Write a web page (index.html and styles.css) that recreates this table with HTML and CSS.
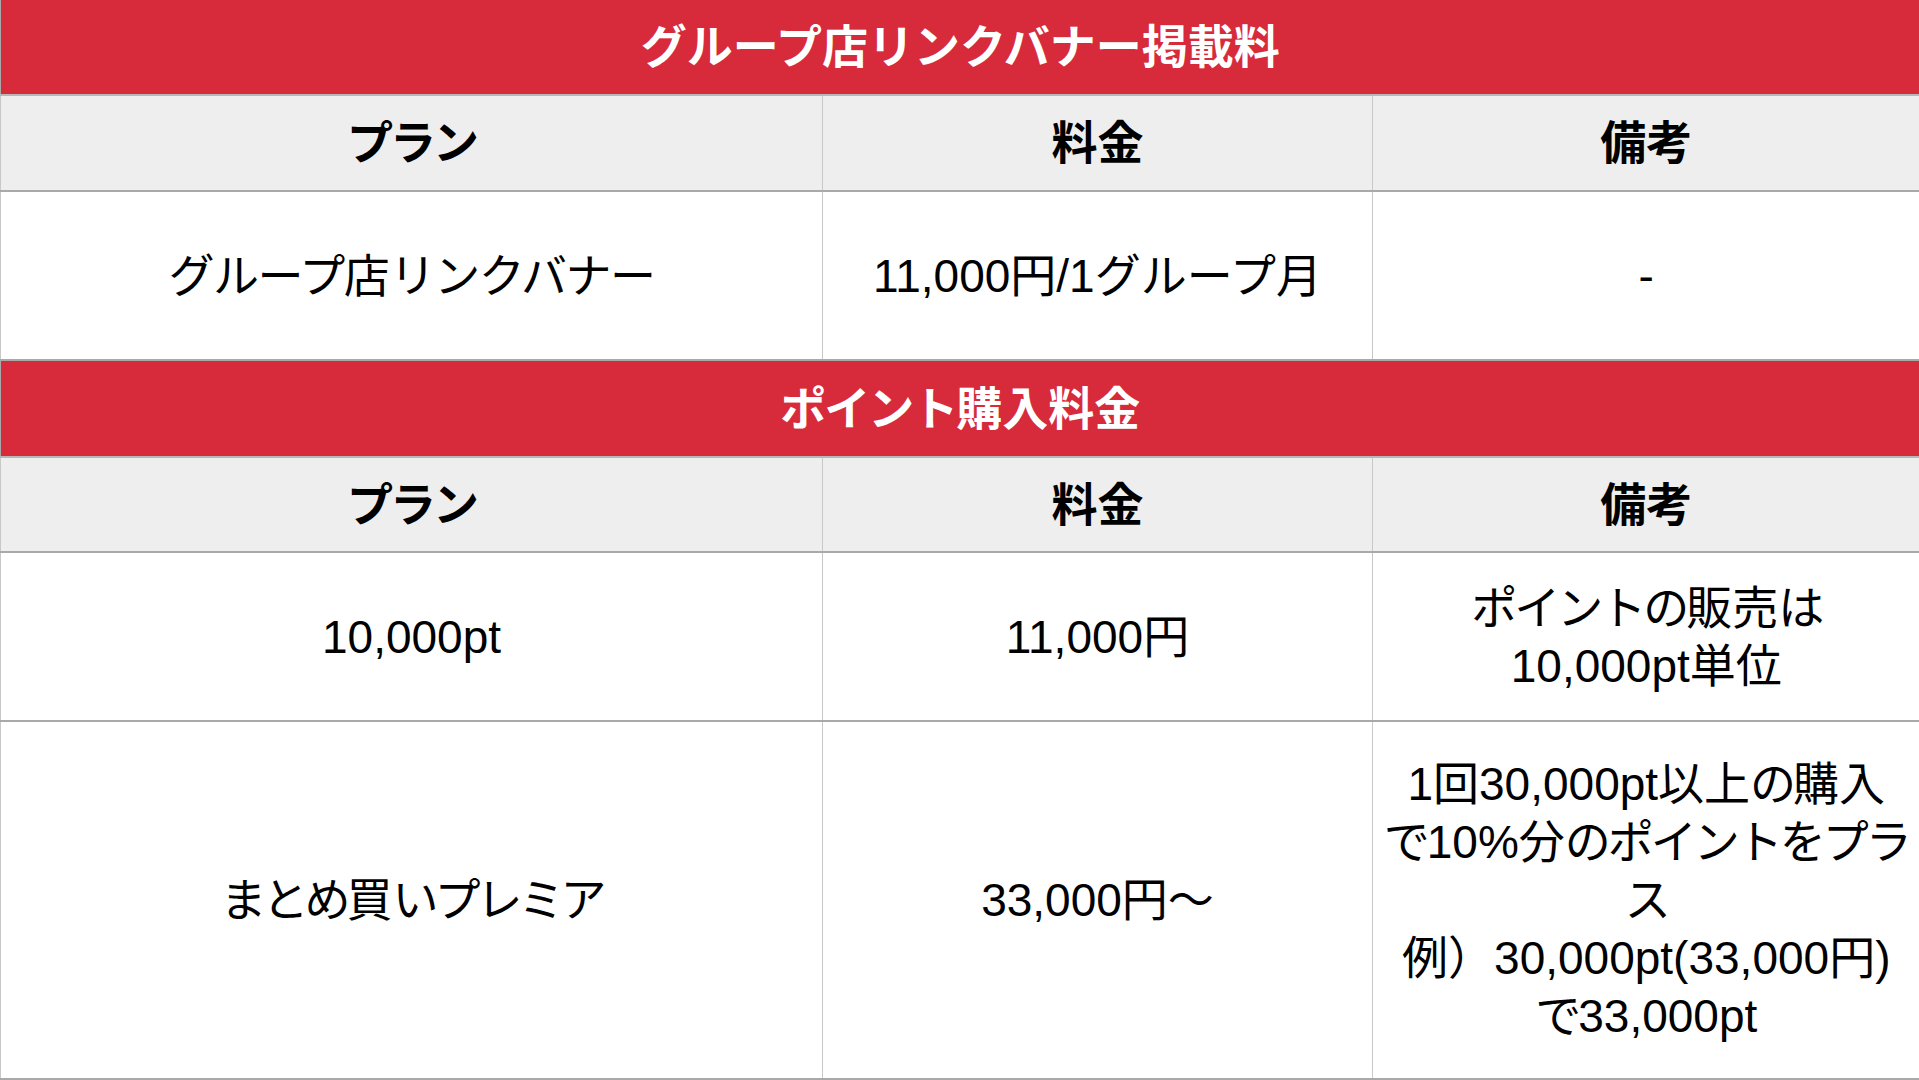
FILE: index.html
```html
<!DOCTYPE html>
<html lang="ja">
<head>
<meta charset="utf-8">
<title>料金表</title>
<link rel="stylesheet" href="styles.css">
</head>
<body>
<table class="price">
  <colgroup>
    <col class="c1">
    <col class="c2">
    <col class="c3">
  </colgroup>
  <tbody>
    <tr class="title-row"><th colspan="3">グループ店リンクバナー掲載料</th></tr>
    <tr class="head-row"><th><span class="kana">プラン</span></th><th>料金</th><th>備考</th></tr>
    <tr class="row-a">
      <td><span class="kana-s">グループ</span>店<span class="kana-s">リンクバナー</span></td>
      <td>11,000円/1グループ月</td>
      <td>-</td>
    </tr>
    <tr class="title-row title-b"><th colspan="3"><span class="kana-t">ポイント</span>購入料金</th></tr>
    <tr class="head-row head-b"><th><span class="kana">プラン</span></th><th>料金</th><th>備考</th></tr>
    <tr class="row-a">
      <td>10,000pt</td>
      <td>11,000円</td>
      <td class="note"><span class="kana">ポイントの</span>販売<span class="kana">は</span><br>10,000pt単位</td>
    </tr>
    <tr class="row-c">
      <td><span class="kana-w">まとめ</span>買<span class="kana-w">いプレミア</span></td>
      <td>33,000円～</td>
      <td class="note">1回30,000pt以上<span class="kana">の</span>購入<br><span class="kana">で</span>10%分<span class="kana">のポイントをプラ</span><br><span class="kana">ス</span><br>例）30,000pt(33,000円)<br><span class="kana">で</span>33,000pt</td>
    </tr>
  </tbody>
</table>
</body>
</html>
```
FILE: styles.css
```css
html, body {
  margin: 0;
  padding: 0;
  background: #ffffff;
}

.price {
  width: 1919px;
  border-collapse: collapse;
  table-layout: fixed;
  font-family: "Liberation Sans", "Noto Sans CJK JP", sans-serif;
  font-size: 46px;
  line-height: 58px;
  color: #000000;
}

.c1 { width: 822px; }
.c2 { width: 550px; }
.c3 { width: 547px; }

.price th,
.price td {
  text-align: center;
  vertical-align: middle;
  padding: 0 6px;
  border-left: 1px solid #c8c8c8;
  border-bottom: 2px solid #a9a9a9;
}

.title-row th {
  background: #d72a3b;
  color: #ffffff;
  font-weight: bold;
  height: 94px;
  border-left: 1px solid #a9a9a9;
  border-bottom: 2px solid #b8b8b8;
}

.title-b th { height: 95px; }

.head-row th {
  background: #eeeeee;
  font-weight: bold;
  height: 94px;
}

.head-b th { height: 93px; }

.row-a td { height: 167px; }

.row-c td { height: 356px; }

.kana { letter-spacing: -3px; }

.kana-s { letter-spacing: -1.5px; }

.kana-w { letter-spacing: -4px; }

.kana-t { letter-spacing: -2px; }

.note { white-space: nowrap; }
```
